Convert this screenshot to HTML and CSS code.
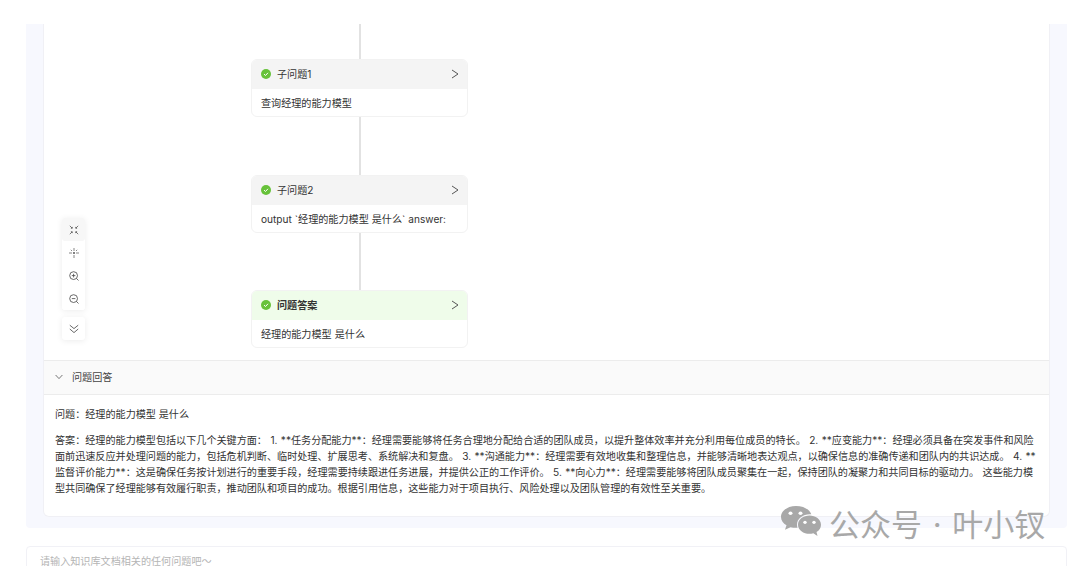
FILE: index.html
```html
<!DOCTYPE html>
<html lang="zh-CN">
<head>
<meta charset="utf-8">
<title>问题回答</title>
<link rel="stylesheet" href="styles.css">
</head>
<body>
<main class="page">
  <section class="panel">
    <div class="card">
      <div class="canvas">
        <div class="edge edge-1"></div>
        <div class="edge edge-2"></div>
        <div class="edge edge-3"></div>

        <article class="node node-1">
          <header class="node-head">
            <svg class="check" viewBox="0 0 10 10"><circle cx="5" cy="5" r="5" fill="#67c23a"/><path d="M3 5.1 4.500 6.500 7 3.800" fill="none" stroke="#fff" stroke-width="1"/></svg>
            <span class="node-title">子问题1</span>
            <svg class="arrow" viewBox="0 0 8 10"><path d="M1 1 7 5 1 9" fill="none" stroke="#555" stroke-width="1"/></svg>
          </header>
          <div class="node-body">查询经理的能力模型</div>
        </article>

        <article class="node node-2">
          <header class="node-head">
            <svg class="check" viewBox="0 0 10 10"><circle cx="5" cy="5" r="5" fill="#67c23a"/><path d="M3 5.1 4.500 6.500 7 3.800" fill="none" stroke="#fff" stroke-width="1"/></svg>
            <span class="node-title">子问题2</span>
            <svg class="arrow" viewBox="0 0 8 10"><path d="M1 1 7 5 1 9" fill="none" stroke="#555" stroke-width="1"/></svg>
          </header>
          <div class="node-body">output `经理的能力模型 是什么` answer:</div>
        </article>

        <article class="node node-3">
          <header class="node-head node-head-done">
            <svg class="check" viewBox="0 0 10 10"><circle cx="5" cy="5" r="5" fill="#67c23a"/><path d="M3 5.1 4.500 6.500 7 3.800" fill="none" stroke="#fff" stroke-width="1"/></svg>
            <span class="node-title node-title-bold">问题答案</span>
            <svg class="arrow" viewBox="0 0 8 10"><path d="M1 1 7 5 1 9" fill="none" stroke="#555" stroke-width="1"/></svg>
          </header>
          <div class="node-body">经理的能力模型 是什么</div>
        </article>

        <div class="tools">
          <div class="tool-group">
            <button class="tool tool-active"><svg viewBox="0 0 10 10"><path d="M.8 .8 3 3M1.900 3.300H3.300V1.900M9.200 .8 7 3M8.100 3.300H6.700V1.900M9.200 9.200 7 7M8.100 6.700H6.700V8.100M.8 9.200 3 7M1.900 6.700H3.300V8.100" fill="none" stroke="#444" stroke-width=".7"/></svg></button>
            <button class="tool"><svg viewBox="0 0 10 10"><circle cx="5" cy="5" r=".9" fill="#444"/><path d="M5 0V3M5 7V10M0 5H3M7 5H10M1.800 1.800 3 3M8.200 1.800 7 3" fill="none" stroke="#555" stroke-width=".7"/></svg></button>
            <button class="tool"><svg viewBox="0 0 10 10"><circle cx="4.600" cy="4.600" r="3.900" fill="none" stroke="#444" stroke-width=".8"/><path d="M2.800 4.600H6.400M4.600 2.800V6.400M7.500 7.500 9.500 9.500" fill="none" stroke="#444" stroke-width=".8"/></svg></button>
            <button class="tool"><svg viewBox="0 0 10 10"><circle cx="4.600" cy="4.600" r="3.900" fill="none" stroke="#444" stroke-width=".8"/><path d="M2.800 4.600H6.400M7.500 7.500 9.500 9.500" fill="none" stroke="#444" stroke-width=".8"/></svg></button>
          </div>
          <button class="tool tool-single"><svg viewBox="0 0 10 10"><path d="M.8 1.200 5 4.600 9.200 1.200M.8 5 5 8.600 9.200 5" fill="none" stroke="#444" stroke-width=".8"/></svg></button>
        </div>
      </div>

      <div class="answer-head">
        <svg class="chevron" viewBox="0 0 8 6"><path d="M.6 1 4 4.600 7.400 1" fill="none" stroke="#555" stroke-width=".8"/></svg>
        <span>问题回答</span>
      </div>
      <div class="answer-body">
        <p class="question">问题：经理的能力模型 是什么</p>
        <p class="answer">答案：经理的能力模型包括以下几个关键方面： 1. **任务分配能力**：经理需要能够将任务合理地分配给合适的团队成员，以提升整体效率并充分利用每位成员的特长。 2. **应变能力**：经理必须具备在突发事件和风险面前迅速反应并处理问题的能力，包括危机判断、临时处理、扩展思考、系统解决和复盘。 3. **沟通能力**：经理需要有效地收集和整理信息，并能够清晰地表达观点，以确保信息的准确传递和团队内的共识达成。 4. **监督评价能力**：这是确保任务按计划进行的重要手段，经理需要持续跟进任务进展，并提供公正的工作评价。 5. **向心力**：经理需要能够将团队成员聚集在一起，保持团队的凝聚力和共同目标的驱动力。 这些能力模型共同确保了经理能够有效履行职责，推动团队和项目的成功。根据引用信息，这些能力对于项目执行、风险处理以及团队管理的有效性至关重要。</p>
      </div>
    </div>
  </section>

  <div class="input">请输入知识库文档相关的任何问题吧～</div>

  <div class="watermark">
    <svg class="wechat" viewBox="0 0 42 35" preserveAspectRatio="none"><path d="M16 1C7.500 1 1 6.500 1 13c0 3.800 2.200 7 5.500 9.200L5 27l5.500-2.800c1.800.5 3.600.8 5.500.8.500 0 1 0 1.500-.1-.3-1.100-.5-2.200-.5-3.400C17 15 22.800 10 30 10c.5 0 1 0 1.300.1C29.800 4.800 23.500 1 16 1Z" fill="#a8a8a8"/><path d="M41 21.500C41 15.700 35.500 11.500 29.500 11.500S18 15.700 18 21.500 23.500 31.500 29.500 31.500c1.300 0 2.600-.2 3.800-.6L37.500 34l-1-4.400c2.800-1.800 4.500-4.700 4.500-8.100Z" fill="#a8a8a8"/><circle cx="10.500" cy="9" r="2" fill="#fff"/><circle cx="20.500" cy="9" r="2" fill="#fff"/><circle cx="25" cy="19" r="1.700" fill="#fff"/><circle cx="34" cy="19" r="1.700" fill="#fff"/></svg>
    <span class="watermark-text">公众号 · 叶小钗</span>
  </div>
</main>
</body>
</html>
```

FILE: styles.css
```css
* {
  box-sizing: border-box;
}

html,
body {
  margin: 0;
  height: 566px;
  overflow: hidden;
  background: #fff;
  font-family: Inter, "Noto Sans CJK SC", sans-serif;
  color: #333;
}

.page {
  position: relative;
  height: 566px;
  padding: 24px 13px 0 26px;
}

.panel {
  height: 504px;
  padding: 0 17px 11px;
  background: #f7f8fe;
  border-radius: 0 0 4px 4px;
}

.card {
  height: 493px;
  background: #fff;
  border: 1px solid #f0f0f5;
  border-top: 0;
  border-radius: 0 0 6px 6px;
}

.canvas {
  position: relative;
  height: 336px;
}

.edge {
  position: absolute;
  left: 315px;
  width: 2px;
  background: #e2e2e2;
}

.edge-1 {
  top: 0;
  height: 36px;
}

.edge-2 {
  top: 93px;
  height: 59px;
}

.edge-3 {
  top: 208px;
  height: 59px;
}

.node {
  position: absolute;
  left: 207px;
  width: 217px;
  height: 58px;
  background: #fff;
  border: 1px solid #f2f2f2;
  border-radius: 6px;
  overflow: hidden;
}

.node-1 {
  top: 35px;
}

.node-2 {
  top: 151px;
}

.node-3 {
  top: 266px;
}

.node-head {
  display: flex;
  align-items: center;
  height: 29px;
  padding: 0 8px 2px 9px;
  background: #f4f4f4;
}

.node-head-done {
  background: #effcea;
}

.check {
  width: 10px;
  height: 10px;
  margin-right: 6px;
}

.node-title {
  flex: 1;
  font-size: 10.1px;
  color: #333;
}

.node-title-bold {
  font-weight: 700;
}

.arrow {
  width: 8px;
  height: 10px;
}

.node-body {
  padding: 0 9px;
  font-size: 10.1px;
  line-height: 28px;
  word-spacing: 0.2px;
  color: #333;
  white-space: nowrap;
}

.tools {
  position: absolute;
  left: 18px;
  top: 194px;
  display: flex;
  flex-direction: column;
  gap: 7px;
}

.tool-group {
  display: flex;
  flex-direction: column;
  background: #fff;
  border-radius: 3px;
  box-shadow: 0 1px 6px rgba(0, 0, 0, 0.08);
}

.tool {
  display: flex;
  align-items: center;
  justify-content: center;
  width: 23px;
  height: 23px;
  padding: 0;
  border: 0;
  background: #fff;
  border-radius: 3px;
}

.tool-active {
  background: #f7f7f7;
}

.tool-single {
  box-shadow: 0 1px 6px rgba(0, 0, 0, 0.08);
}

.tool svg {
  width: 10px;
  height: 10px;
}

.answer-head {
  display: flex;
  align-items: center;
  gap: 9px;
  height: 35px;
  padding: 0 11px 2px;
  background: #fafafa;
  border-top: 1px solid #ececec;
  border-bottom: 1px solid #ececec;
  font-size: 10.1px;
  color: #444;
}

.chevron {
  width: 8px;
  height: 6px;
}

.answer-body {
  padding: 11px 12px 0 11px;
  font-size: 10.1px;
  color: #333;
}

.question {
  margin: 0;
  line-height: 16px;
}

.answer {
  margin: 10px 0 0;
  line-height: 16px;
  word-spacing: 0.6px;
}

.input {
  height: 40px;
  margin-top: 18px;
  padding: 6px 13px;
  background: #fff;
  border: 1px solid #f1f1f6;
  border-radius: 4px;
  font-size: 10.1px;
  line-height: 16px;
  color: #b5b5b5;
}

.watermark {
  position: absolute;
  left: 780px;
  top: 505px;
  display: flex;
  align-items: flex-start;
  gap: 7px;
  color: #a8a8a8;
  white-space: nowrap;
}

.watermark-text {
  font-size: 31px;
  line-height: 40px;
  word-spacing: 2px;
}

.wechat {
  width: 42px;
  height: 32px;
}
```
